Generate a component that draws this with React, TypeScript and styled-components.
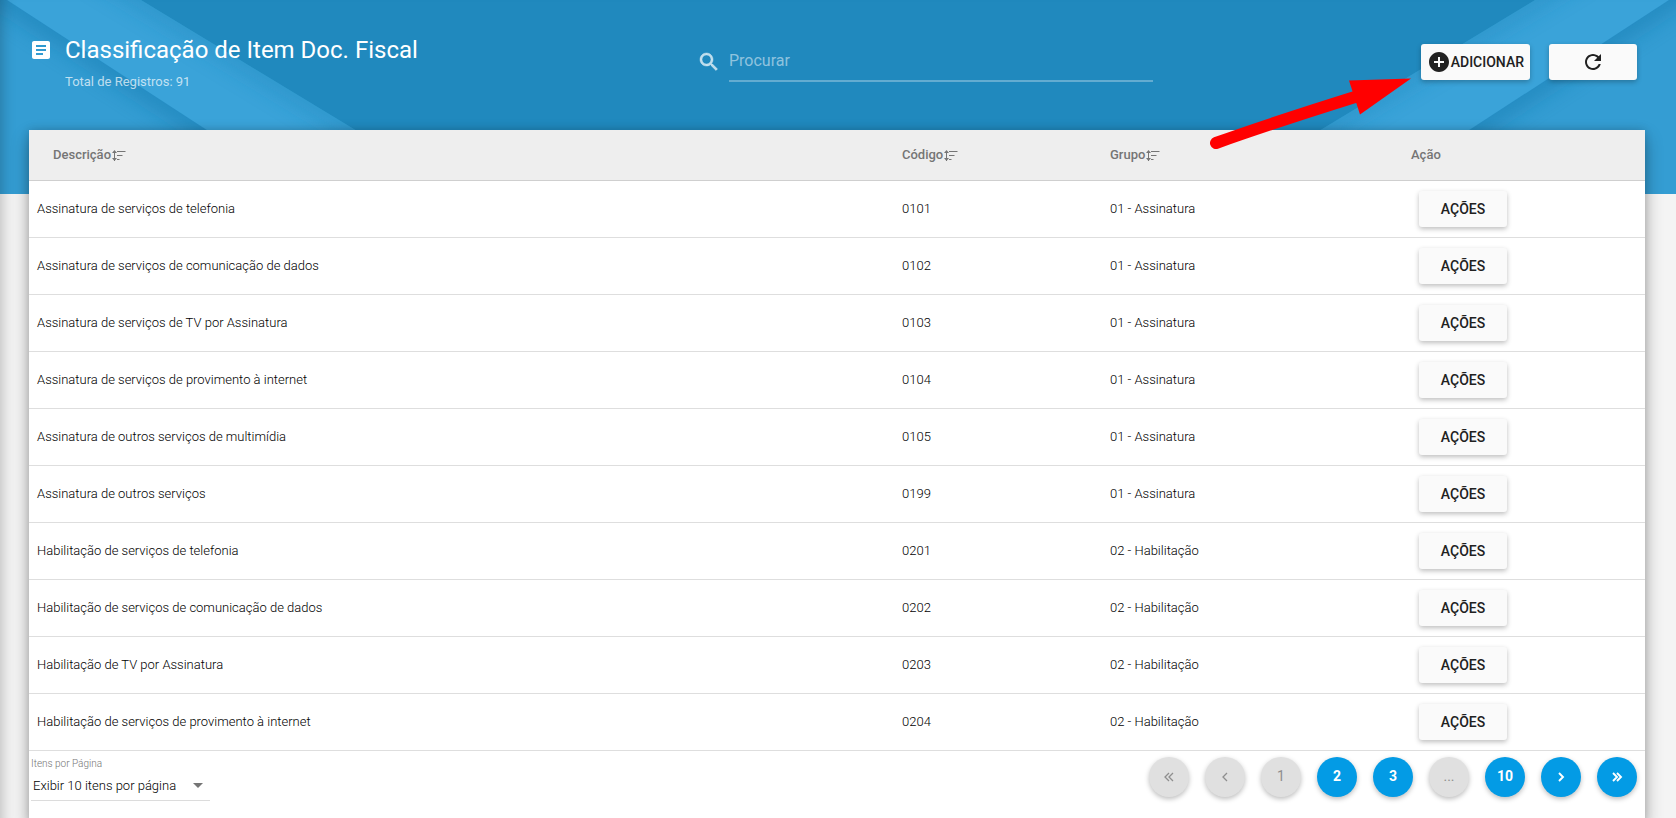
import React from "react";
import styled, { createGlobalStyle, css } from "styled-components";

const GlobalStyle = createGlobalStyle`
  *, *::before, *::after { box-sizing: border-box; }
  body { margin: 0; background: #f4f4f4; font-family: Roboto, "Liberation Sans", sans-serif; color: #212121; }
  button, input, select { font-family: inherit; }
`;

const Page = styled.div`
  position: relative;
  min-height: 100vh;
  overflow: hidden;
  box-shadow: inset 14px 0 14px -12px rgba(0, 0, 0, 0.24);
`;

const Backdrop = styled.svg`
  position: absolute;
  top: 0;
  width: 400px;
  height: 194px;
`;
const BackdropLeft = styled(Backdrop)`left: 0;`;
const BackdropRight = styled(Backdrop)`right: 0;`;

const Banner = styled.div`
  position: absolute;
  z-index: -1;
  inset: 0 0 auto;
  height: 194px;
  background: #2089be;
`;

const Header = styled.header`
  position: relative;
  display: grid;
  grid-template-columns: 668fr 456fr 484fr;
  height: 130px;
  padding: 0 39px 0 29px;
`;

const Heading = styled.div`
  display: grid;
  grid-template-columns: 24px 1fr;
  column-gap: 12px;
  align-content: start;
  align-items: center;
  padding-top: 34px;
  color: #fff;
`;

const Title = styled.h1`
  margin: 0;
  font-size: 24px;
  line-height: 32px;
  font-weight: 400;
`;

const Subtitle = styled.p`
  grid-column: 2;
  margin: 6px 0 0;
  font-size: 13px;
  line-height: 20px;
  font-weight: 400;
  color: rgba(255, 255, 255, 0.7);
`;

const Search = styled.label`
  display: flex;
  align-items: center;
  gap: 8px;
  height: 42px;
  margin-top: 40px;
  color: rgba(255, 255, 255, 0.7);
`;

const SearchInput = styled.input`
  flex: 1;
  min-width: 0;
  height: 42px;
  padding: 0;
  border: 0;
  border-bottom: 2px solid rgba(255, 255, 255, 0.3);
  outline: 0;
  background: transparent;
  color: #fff;
  font-size: 16px;
  &::placeholder { color: rgba(255, 255, 255, 0.5); opacity: 1; }
`;

const Actions = styled.div`
  display: flex;
  justify-content: flex-end;
  gap: 19px;
  padding-top: 44px;
`;

const RaisedButton = styled.button<{ $tight?: boolean }>`
  display: inline-flex;
  align-items: center;
  justify-content: center;
  min-width: 88px;
  height: 36px;
  padding: 0 ${(p) => (p.$tight ? 6 : 16)}px 1px;
  border: 0;
  border-radius: 3px;
  background: #fafafa;
  box-shadow: 0 2px 5px 0 rgba(0, 0, 0, 0.26);
  color: #212121;
  font-size: 14px;
  font-weight: 500;
  line-height: 36px;
  cursor: pointer;
`;

const Card = styled.main`
  position: relative;
  min-height: calc(100vh - 130px);
  margin: 0 31px 0 29px;
  background: #fff;
  box-shadow: 0 8px 17px rgba(0, 0, 0, 0.3), 0 0 8px rgba(0, 0, 0, 0.16);
`;

const Table = styled.table`
  width: 100%;
  table-layout: fixed;
  border-collapse: separate;
  border-spacing: 0;
`;

const Col = styled.col<{ $width?: number }>`
  width: ${(p) => (p.$width ? `${p.$width}px` : "auto")};
`;

const Th = styled.th<{ $first?: boolean }>`
  height: 51px;
  padding: 0 0 2px ${(p) => (p.$first ? 24 : 8)}px;
  border-bottom: 1px solid #cfcfcf;
  background: #eee;
  color: #757575;
  font-size: 13px;
  font-weight: 500;
  text-align: left;
`;

const SortLabel = styled.span`
  display: flex;
  align-items: center;
  svg { margin-top: 3px; }
`;

const Td = styled.td`
  height: 57px;
  padding: 0 8px 2px;
  border-bottom: 1px solid #dedede;
  font-size: 13px;
  font-weight: 300;
  color: #000;
`;

const ActionTd = styled(Td)`
  padding: 0 8px 0 16px;
`;

const Footer = styled.footer`
  display: flex;
  justify-content: space-between;
  align-items: flex-start;
  padding: 6px 8px 20px 2px;
`;

const PerPage = styled.label`
  display: block;
  width: 179px;
  color: #757575;
  font-size: 10px;
  font-weight: 300;
  line-height: 14px;
`;

const SelectWrap = styled.span`
  display: flex;
  align-items: center;
  border-bottom: 1px solid #dcdcdc;
  height: 30px;
`;

const Select = styled.select`
  flex: 1;
  width: 100%;
  padding: 0 2px;
  border: 0;
  outline: 0;
  appearance: none;
  background: transparent;
  color: #000;
  font-size: 13px;
  font-weight: 300;
  line-height: 20px;
`;

const Caret = styled.span`
  margin-right: 7px;
  border: 5px solid transparent;
  border-top: 5px solid #757575;
  border-bottom: 0;
`;

const Pager = styled.nav`
  display: flex;
  gap: 16px;
`;

const PageButton = styled.button`
  display: inline-flex;
  align-items: center;
  justify-content: center;
  width: 40px;
  height: 40px;
  padding: 0 0 2px;
  border: 0;
  border-radius: 50%;
  background: #039be5;
  box-shadow: 0 2px 5px 0 rgba(0, 0, 0, 0.26);
  color: #fff;
  font-size: 14px;
  font-weight: 700;
  svg { margin-top: 2px; }
  ${(p) => p.disabled && css`
    background: #e0e0e0;
    color: #8e8e8e;
    font-weight: 400;
  `}
`;

const Arrow = styled.svg`
  position: absolute;
  left: calc(75% - 51px);
  top: 76px;
  width: 206px;
  height: 76px;
  pointer-events: none;
`;

const Icon = ({ d, size = 24 }: { d: string; size?: number }) => (
  <svg width={size} height={size} viewBox="0 0 24 24" fill="currentColor" aria-hidden="true">
    <path d={d} />
  </svg>
);

const ICONS = {
  article: "M19 3H5c-1.1 0-2 .9-2 2v14c0 1.1.9 2 2 2h14c1.1 0 2-.9 2-2V5c0-1.1-.9-2-2-2zm-5 14H7v-2h7v2zm3-4H7v-2h10v2zm0-4H7V7h10v2z",
  search: "M15.5 14h-.79l-.28-.27C15.41 12.59 16 11.11 16 9.5 16 5.91 13.09 3 9.5 3S3 5.91 3 9.5 5.91 16 9.5 16c1.61 0 3.09-.59 4.23-1.57l.27.28v.79l5 4.99L20.49 19l-4.99-5zm-6 0C7.01 14 5 11.99 5 9.5S7.01 5 9.5 5 14 7.01 14 9.5 11.99 14 9.5 14z",
  add: "M12 2C6.48 2 2 6.48 2 12s4.48 10 10 10 10-4.48 10-10S17.52 2 12 2zm5 11h-4v4h-2v-4H7v-2h4V7h2v4h4v2z",
  refresh: "M17.65 6.35C16.2 4.9 14.21 4 12 4c-4.42 0-7.99 3.58-7.99 8s3.57 8 7.99 8c3.73 0 6.84-2.55 7.73-6h-2.08c-.82 2.33-3.04 4-5.65 4-3.31 0-6-2.69-6-6s2.69-6 6-6c1.66 0 3.14.69 4.22 1.78L13 11h7V4l-2.35 2.35z",
};

const SearchIcon = styled.svg`
  flex: none;
  margin-top: 2px;
  fill: currentColor;
  stroke: currentColor;
  stroke-width: 0.5px;
`;

const SortIcon = () => (
  <svg width="16" height="14" viewBox="0 0 16 14" fill="none" stroke="#757575" aria-hidden="true">
    <path d="M3.5 2v10" />
    <path d="M6 2.500h8.500M6 6.500h5.500M6 10.500h2.500" strokeWidth="1.2" />
    <path d="M1 4l2.500-3 2.500 3zM1 9l2.500 3 2.500-3z" fill="#757575" stroke="none" />
  </svg>
);

const Chevron = ({ dir, double }: { dir: "left" | "right"; double?: boolean }) => {
  const one = dir === "left" ? "M7 1L3 5l4 4" : "M3 1l4 4-4 4";
  return (
    <svg width={double ? 14 : 10} height="10" viewBox={double ? "0 0 14 10" : "0 0 10 10"} fill="none" stroke="currentColor" strokeWidth={dir === "left" ? 1.3 : 1.9} aria-hidden="true">
      <path d={one} />
      {double && <path d={one} transform="translate(4 0)" />}
    </svg>
  );
};

const Facets = ({ id }: { id: string }) => (
  <>
    <defs>
      <filter id={id} x="-20%" y="-20%" width="140%" height="140%">
        <feGaussianBlur stdDeviation="11" />
      </filter>
      <clipPath id={`${id}-outer`}><path d="M0 0h7L305 194H0z" /></clipPath>
      <clipPath id={`${id}-band`}><path d="M7 0h134L461 194H305z" /></clipPath>
    </defs>
    <path d="M0 0h7L305 194H0z" fill="#349dd3" />
    <g clipPath={`url(#${id}-outer)`}>
      <path d="M-40 -31L340 217" stroke="#1679ad" strokeWidth="18" opacity="0.65" filter={`url(#${id})`} />
    </g>
    <path d="M7 0h134L461 194H305z" fill="#3aa3d9" />
    <g clipPath={`url(#${id}-band)`}>
      <path d="M90 -31L500 218" stroke="#2089be" strokeWidth="14" opacity="0.7" filter={`url(#${id})`} />
    </g>
  </>
);

const rows = [
  ["Assinatura de serviços de telefonia", "0101", "01 - Assinatura"],
  ["Assinatura de serviços de comunicação de dados", "0102", "01 - Assinatura"],
  ["Assinatura de serviços de TV por Assinatura", "0103", "01 - Assinatura"],
  ["Assinatura de serviços de provimento à internet", "0104", "01 - Assinatura"],
  ["Assinatura de outros serviços de multimídia", "0105", "01 - Assinatura"],
  ["Assinatura de outros serviços", "0199", "01 - Assinatura"],
  ["Habilitação de serviços de telefonia", "0201", "02 - Habilitação"],
  ["Habilitação de serviços de comunicação de dados", "0202", "02 - Habilitação"],
  ["Habilitação de TV por Assinatura", "0203", "02 - Habilitação"],
  ["Habilitação de serviços de provimento à internet", "0204", "02 - Habilitação"],
];

export default function App() {
  return (
    <Page>
      <GlobalStyle />
      <Banner>
        <BackdropLeft viewBox="0 0 400 194" aria-hidden="true"><Facets id="facet-l" /></BackdropLeft>
        <BackdropRight viewBox="0 0 400 194" aria-hidden="true">
          <g transform="translate(400 0) scale(-1 1)"><Facets id="facet-r" /></g>
        </BackdropRight>
      </Banner>
      <Header>
        <Heading>
          <Icon d={ICONS.article} />
          <Title>Classificação de Item Doc. Fiscal</Title>
          <Subtitle>Total de Registros: 91</Subtitle>
        </Heading>
        <Search>
          <SearchIcon width="24" height="24" viewBox="0 0 24 24" aria-hidden="true"><path d={ICONS.search} /></SearchIcon>
          <SearchInput type="text" placeholder="Procurar" aria-label="Procurar" />
        </Search>
        <Actions>
          <RaisedButton type="button" $tight><Icon d={ICONS.add} />ADICIONAR</RaisedButton>
          <RaisedButton type="button" aria-label="Atualizar"><Icon d={ICONS.refresh} /></RaisedButton>
        </Actions>
      </Header>
      <Card>
        <Table>
          <colgroup>
            <Col />
            <Col $width={208} />
            <Col $width={301} />
            <Col $width={242} />
          </colgroup>
          <thead>
            <tr>
              <Th $first><SortLabel>Descrição<SortIcon /></SortLabel></Th>
              <Th><SortLabel>Código<SortIcon /></SortLabel></Th>
              <Th><SortLabel>Grupo<SortIcon /></SortLabel></Th>
              <Th>Ação</Th>
            </tr>
          </thead>
          <tbody>
            {rows.map(([name, code, group]) => (
              <tr key={code}>
                <Td>{name}</Td>
                <Td>{code}</Td>
                <Td>{group}</Td>
                <ActionTd><RaisedButton type="button">AÇÕES</RaisedButton></ActionTd>
              </tr>
            ))}
          </tbody>
        </Table>
        <Footer>
          <PerPage>
            Itens por Página
            <SelectWrap>
              <Select defaultValue="10"><option value="10">Exibir 10 itens por página</option></Select>
              <Caret />
            </SelectWrap>
          </PerPage>
          <Pager aria-label="Paginação">
            <PageButton type="button" disabled aria-label="Primeira"><Chevron dir="left" double /></PageButton>
            <PageButton type="button" disabled aria-label="Anterior"><Chevron dir="left" /></PageButton>
            <PageButton type="button" disabled>1</PageButton>
            <PageButton type="button">2</PageButton>
            <PageButton type="button">3</PageButton>
            <PageButton type="button" disabled>...</PageButton>
            <PageButton type="button">10</PageButton>
            <PageButton type="button" aria-label="Próxima"><Chevron dir="right" /></PageButton>
            <PageButton type="button" aria-label="Última"><Chevron dir="right" double /></PageButton>
          </Pager>
        </Footer>
      </Card>
      <Arrow viewBox="0 0 206 76" aria-hidden="true">
        <path d="M10 67Q66 47 149 21" fill="none" stroke="#f00" strokeWidth="12" strokeLinecap="round" />
        <path d="M143 4.500L205 2.500L154 38.500z" fill="#f00" />
      </Arrow>
    </Page>
  );
}
